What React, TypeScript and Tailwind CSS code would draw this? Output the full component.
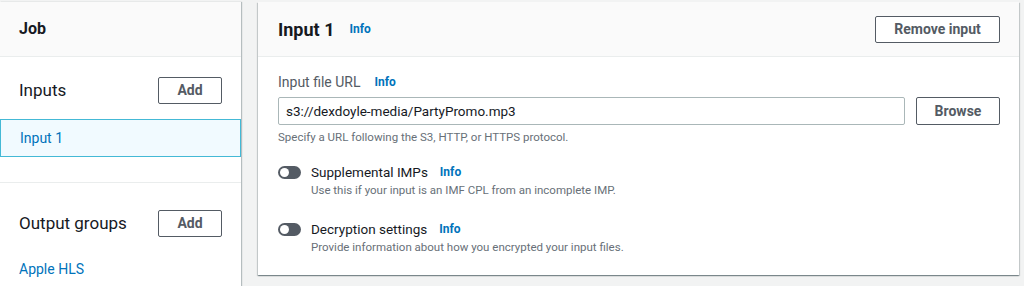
import React from "react";

const font = { fontFamily: 'Roboto, "Liberation Sans", sans-serif' };

const Info = () => (
  <span className="text-[12px] font-bold text-[#0073bb] leading-none">Info</span>
);

const Btn = ({ children, className = "" }: { children: React.ReactNode; className?: string }) => (
  <button
    className={
      "h-[27px] rounded-[2px] border border-[#545b64] bg-white text-[14px] font-bold text-[#545b64] " +
      className
    }
  >
    {children}
  </button>
);

const Toggle = () => (
  <span className="mt-[4px] flex h-[13px] w-[23px] shrink-0 items-center rounded-full bg-[#545b64] px-[2px]">
    <span className="h-[9px] w-[9px] rounded-full bg-white" />
  </span>
);

const ToggleRow = ({ title, desc }: { title: string; desc: string }) => (
  <div className="flex gap-[10px]">
    <Toggle />
    <div>
      <div className="flex items-center gap-[12px] text-[13.5px] leading-[20px] text-[#16191f]">
        {title}
        <Info />
      </div>
      <div className="text-[11.5px] leading-[16px] text-[#687078]">{desc}</div>
    </div>
  </div>
);

export default function App() {
  return (
    <div style={font} className="flex h-[286px] w-[1024px] overflow-hidden bg-[#f2f3f3] pt-[2px]">
      {/* sidebar */}
      <div className="w-[241px] shrink-0 bg-white shadow-[1px_0_1px_0_rgba(0,28,36,0.25)]">
        <div className="flex h-[55px] items-center border-b border-[#eaeded] bg-[#fafafa] px-[19px] text-[16px] font-bold text-[#16191f]">
          Job
        </div>
        <div className="flex items-center justify-between pl-[19px] pr-[19px] pt-[20px]">
          <span className="text-[17px] text-[#16191f]">Inputs</span>
          <Btn className="w-[64px]">Add</Btn>
        </div>
        <div className="mt-[15px] flex h-[38px] items-center border border-[#44b9d6] bg-[#f1faff] px-[19px] text-[14px] text-[#0073bb]">
          Input 1
        </div>
        <div className="mt-[25px] border-t border-[#eaeded]" />
        <div className="flex items-center justify-between px-[19px] pt-[27px]">
          <span className="text-[17px] text-[#16191f]">Output groups</span>
          <Btn className="w-[64px]">Add</Btn>
        </div>
        <div className="mt-[22px] px-[19px] text-[14px] leading-[20px] text-[#0073bb]">Apple HLS</div>
      </div>

      {/* main card */}
      <div className="ml-[17px] h-[273px] w-[761px] shrink-0 bg-white shadow-[0_1px_1px_0_rgba(0,28,36,0.3),1px_1px_1px_0_rgba(0,28,36,0.15),-1px_1px_1px_0_rgba(0,28,36,0.15)]">
        <div className="flex h-[55px] items-center justify-between border-b border-[#eaeded] bg-[#fafafa] pl-[20px] pr-[19px]">
          <div className="flex items-center gap-[15px]">
            <span className="text-[18px] font-bold text-[#16191f]">Input 1</span>
            <Info />
          </div>
          <Btn className="w-[125px]">Remove input</Btn>
        </div>
        <div className="pl-[20px] pr-[19px] pt-[15px]">
          <div className="flex items-center gap-[14px] text-[14px] leading-[20px] text-[#545b64]">
            Input file URL
            <Info />
          </div>
          <div className="mt-[5px] flex gap-[11px]">
            <div className="flex h-[28px] flex-1 items-center rounded-[2px] border border-[#aab7b8] px-[7px] text-[13.5px] text-[#16191f]">
              s3://dexdoyle-media/PartyPromo.mp3
            </div>
            <Btn className="h-[28px] w-[84px]">Browse</Btn>
          </div>
          <div className="mt-[4px] text-[11.5px] leading-[16px] text-[#687078]">
            Specify a URL following the S3, HTTP, or HTTPS protocol.
          </div>
          <div className="mt-[17px] flex flex-col gap-[21px]">
            <ToggleRow title="Supplemental IMPs" desc="Use this if your input is an IMF CPL from an incomplete IMP." />
            <ToggleRow title="Decryption settings" desc="Provide information about how you encrypted your input files." />
          </div>
        </div>
      </div>
    </div>
  );
}
